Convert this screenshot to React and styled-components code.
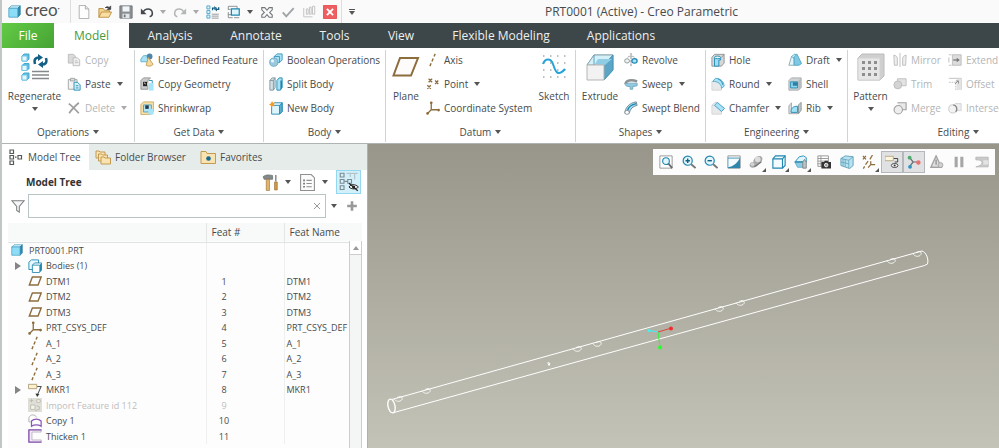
import React, { useState } from "react"

import styled, { createGlobalStyle } from "styled-components"

const BLUE = "#1f87b0"
const SKY = "#a8e2f6"
const BROWN = "#8c6d3d"
const GREY = "#8f8f8f"
const PALE = "#b9b9b9"

const axisPath = <path d="M10.5 1 9.2 4M8.2 6.2 6.8 9.6M5.8 11.8 4.5 15" stroke={BROWN} strokeWidth="1.6" />
const csysPath = (
	<g stroke={BROWN} strokeWidth="1.5" fill={BROWN}>
		<path d="M6 2v8h8M6 10l-4 4" fill="none" />
		<circle cx="6" cy="2" r=".8" />
		<circle cx="14.4" cy="10.4" r=".8" />
		<circle cx="1.8" cy="14.2" r=".8" />
	</g>
)
const planePath = <path d="M5 3.5h10l-3.5 9H1.5z" stroke={BROWN} strokeWidth="1.6" fill="#fff" />

// every drawing sits on a 16 x 16 grid unless it is in bigIcons
const icons = {
	cube: (
		<>
			<path d="M1 4 4 1h11l-3 3z" fill="#d6f3fc" stroke="#4ba3c4" />
			<path d="M12 4l3-3v11l-3 3z" fill="#2d8ab3" stroke="#2d7fa3" />
			<path d="M1 4h11v11H1z" fill="#8ddcf8" stroke="#4ba3c4" />
		</>
	),
	newFile: (
		<>
			<path d="M2.500.5h7l4 4v11h-11z" fill="#fdfdfd" stroke="#a6a9ab" />
			<path d="M9.500.5v4h4" fill="#dfe6ea" stroke="#a6a9ab" />
		</>
	),
	open: (
		<>
			<path d="M1 14V4h5l1.500 2H13v3" fill="#f2d48f" stroke="#b98b3c" />
			<path d="M1 14 4 8h11.500l-3 6z" fill="#f9dfa2" stroke="#b98b3c" />
			<path d="M8 3.500c1.500-2 3.500-2 5-.5M14.500 1v4h-4z" fill="#3b3f42" stroke="#3b3f42" strokeWidth=".8" />
		</>
	),
	save: (
		<>
			<path d="M1 1h14v14H1z" fill="#8b9094" stroke="#6d7275" />
			<path d="M4 1.500h8v6H4z" fill="#f2f4f5" />
			<path d="M4 10h8v5H4z" fill="#e3e6e8" />
			<path d="M5.500 11h2v3h-2z" fill="#6d7275" />
		</>
	),
	undo: (
		<>
			<path d="M3 9c3-6 10-5.500 11-.5.5 3-1 4.500-3 5" stroke="#42494d" strokeWidth="1.800" />
			<path d="M1 4v6.500h6.500z" fill="#42494d" />
		</>
	),
	redo: (
		<>
			<path d="M13 9c-3-6-10-5.500-11-.5-.5 3 1 4.500 3 5" stroke="#b4b7b9" strokeWidth="1.800" />
			<path d="M15 4v6.500H8.500z" fill="#b4b7b9" />
		</>
	),
	regen: (
		<>
			<path d="M1 1h3.500v3.500H1zM1 6.300h3.500v3.500H1zM1 11.500h3.500V15H1z" fill="#d8f3fc" stroke="#4ba3c4" />
			<path d="M6.500 10.500h8M6.500 12.700h8M6.500 15h8" stroke="#8b8f91" />
			<path d="M7.500 6V3.500H10M14.500 2.500V5H12" stroke="#145f82" strokeWidth="1.500" />
			<path d="M9.500 1v5l2.500-2.500zM12.500 2.500v5L10 5z" fill="#145f82" />
		</>
	),
	windows: (
		<>
			<path d="M1.500 5V1.500h10V5M1.500 8v6.500h5" stroke="#83888b" />
			<path d="M1 11h5M1 5h3" stroke="#83888b" />
			<path d="M5 4.500h9v7H5z" fill="#dff5fd" stroke={BLUE} strokeWidth="1.400" />
			<path d="M8 14.500h6" stroke="#83888b" />
		</>
	),
	closeAll: (
		<path
			d="M2 3h3.500L8 6l2.500-3H14v2.500L11 8.500l3 3V14h-3.500L8 11l-2.500 3H2v-2.500l3-3-3-3z"
			stroke="#70767a"
			strokeWidth="1.200"
		/>
	),
	check: <path d="M2 8.500 6 13l8.500-9.500" stroke="#a2a5a7" strokeWidth="2.200" />,
	bars: (
		<>
			<path d="M2 3.500v10h10" stroke="#bbbec0" />
			<path d="M5 4.500h2v6H5zM8.500 2.500h2v8h-2zM12 1.500h2.500v9H12z" stroke="#bbbec0" />
		</>
	),
	closeRed: (
		<>
			<path d="M.5.500h15v15H.5z" fill="#ee5f62" stroke="#e8484b" />
			<path d="m4.500 4.500 7 7M11.500 4.500l-7 7" stroke="#fff" strokeWidth="2.200" />
		</>
	),
	copy: (
		<>
			<path d="M1.500 1.500h6l2 2v8h-8z" fill="#d9dadb" stroke={PALE} />
			<path d="M7 5.500h5l2.500 2.500v6.500H7z" fill="#f0f0f0" stroke={PALE} />
			<path d="M9 9h3M9 11h4" stroke={PALE} />
		</>
	),
	paste: (
		<>
			<path d="M1.500 3h10v11h-10z" fill="#f3f3f3" stroke="#9b9fa1" />
			<path d="M4 1.500h5v3H4z" fill="#dadcdd" stroke="#9b9fa1" />
			<path d="M8 6h4l3 3v6H8z" fill="#d5f2fc" stroke={BLUE} />
			<path d="M10 10h3M10 12.500h3" stroke={BLUE} />
		</>
	),
	del: <path d="M2 3c4 3 7 6 11.500 11M13.500 2C9 6 5 10 2.500 14" stroke="#9d9fa0" strokeWidth="2" />,
	udf: (
		<>
			<path d="M1 7 4 3h6v7H1z" fill={SKY} stroke="#5aaed0" />
			<circle cx="11" cy="4" r="3.300" fill="#4c86ad" />
			<path d="m9.500 5 5.500 8c-2 2.500-6 2.500-8 1z" fill="#f4d99f" stroke="#c39a52" />
		</>
	),
	copyGeom: (
		<>
			<path d="m1 4 3-3h8L9 4v10H1z" fill="#c8cacb" stroke={GREY} />
			<path d="M3.500 5.500H8v5H3.500z" fill="#222" />
			<path d="M6.500 8 4.500 6.500M8 8h5" stroke="#fff" />
			<path d="M10 7h5.500v8.500H10z" fill="#a5e4fa" />
			<path d="M10 4h4v3" stroke={BLUE} />
		</>
	),
	shrink: (
		<>
			<path d="m1 4 3-3h11.500v11l-3 3.500H1z" fill="#f5dfa9" stroke="#d0a961" />
			<path d="M4 4.500h9v8H4z" fill="#b5e6f8" stroke="#4a9dc0" />
			<path d="M6 5h4v4H6z" fill="#223746" />
			<path d="M9.500 9h6v6.500h-6z" fill="#a5e4fa" />
		</>
	),
	boolean: (
		<>
			<path d="m6 4 3-3h6v7l-3 3H6z" fill={SKY} stroke="#3c96bb" />
			<path d="M6 4h6v7" stroke="#3c96bb" />
			<circle cx="5.500" cy="10.500" r="4.700" fill="#9ac9de" stroke="#6ba7c2" />
			<circle cx="4" cy="9" r="1.800" fill="#e2f6fd" />
		</>
	),
	split: (
		<>
			<path d="m1 4 2.500-3H7v11l-2 3H1z" fill="#d2e0e5" stroke="#7b959f" />
			<path d="M5 4v11M1 4h4l2-3" stroke="#7b959f" />
			<path d="m9 4 2.500-3H15v11l-2 3H9z" fill={SKY} stroke={BLUE} />
			<path d="M13 4h2v8l-2 3z" fill={BLUE} />
		</>
	),
	newBody: (
		<>
			<path d="m3 5 3-3h9v10l-3 3H3z" fill="#dff5fd" stroke={BLUE} />
			<path d="M12 5l3-3v10l-3 3z" fill="#5aaed0" stroke={BLUE} />
			<path d="M3 5h9" stroke={BLUE} />
			<path d="m3.500 0 1 2 2.200-.2L5.500 4l1 2-2.200-.4L2.500 7.500 2 5 0 4l2-1.200z" fill="#f59b23" />
		</>
	),
	axis: axisPath,
	point: (
		<path
			d="m3 2 4 4M7 2 3 6M10.500 4l3.500 4M14 4l-3.500 4M1.500 9.500l4 4M5.500 9.500l-4 4"
			stroke={BROWN}
			strokeWidth="1.500"
		/>
	),
	csys: csysPath,
	plane: planePath,
	revolve: (
		<>
			<path d="M8 0v16" stroke="#7a8185" strokeDasharray="3 1" />
			<ellipse cx="3.500" cy="9" rx="2.800" ry="2.500" fill="#eef1f2" stroke="#8b9295" />
			<ellipse cx="12" cy="9" rx="3" ry="2.500" fill={SKY} stroke={BLUE} strokeWidth="1.400" />
			<path d="M4 5c2-2 6-2 8 0" stroke="#9aa1a4" />
		</>
	),
	sweep: (
		<>
			<path d="M2 8c0-4 6-5.500 13-3" stroke="#8b9295" strokeWidth="3" />
			<path d="M1 7c0 3 2 4 6 4v3h3v-3l5-1V7H6c-2 0-4 1-5 0z" fill="#8ecbe2" stroke="#78a6b8" />
		</>
	),
	sweptBlend: (
		<>
			<path d="M1 14c0-6 5-12 13-13l1 4C10 6 7 9 6 14z" fill={SKY} stroke="#6b7f88" />
			<path d="M4 11c1-4 5-7 10-8" stroke={BLUE} strokeWidth="1.600" />
			<ellipse cx="3.500" cy="13" rx="2.500" ry="2.300" fill="#fff" stroke="#858c8f" />
		</>
	),
	hole: (
		<>
			<path d="m1 5 3-3.500h11v10L12 15H1z" fill="#d5d7d8" stroke={GREY} />
			<path d="M4 15V6c0-2 7-2 7 0v2H9v7z" fill="#9edcf3" stroke={BLUE} />
			<ellipse cx="7.500" cy="5" rx="3.500" ry="1.500" fill="#e7f8fe" stroke={BLUE} />
			<path d="M12 5l3-3.500" stroke={GREY} />
		</>
	),
	round: (
		<>
			<path d="M1 5h8l3 3v7H1z" fill="#e8e9ea" stroke="#d3d5d6" />
			<path d="M2 5 5 1.500c5 0 10 3 10 9L12 13c0-5-4-8-10-8z" fill={SKY} stroke="#55a8c8" />
			<path d="M8 2c3 1.500 5 4 5.500 7" stroke={BLUE} />
		</>
	),
	chamfer: (
		<>
			<path d="M1 5h6l5 5v5H1z" fill="#e8e9ea" stroke="#d3d5d6" />
			<path d="m4 5 3-3.500 8.500 7L12 12z" fill={SKY} stroke="#3c96bb" />
			<path d="M1 5l4-3.500h2" stroke="#c3c6c7" />
		</>
	),
	draft: (
		<>
			<path d="M1 14 4 4h3v10z" fill="#e1f5fc" stroke="#8da5ae" />
			<path d="m4 4 4-3 2 2-3 3z" fill="#fff" stroke="#4ba3c4" />
			<path d="M7 14V4l3-3 5.500 11-3 2z" fill="#7ec8e3" stroke="#4ba3c4" />
		</>
	),
	shell: (
		<>
			<path d="m1 4 3-3h11v11l-3 3H1z" fill="#d0d3d4" stroke="#a3a7a9" />
			<path d="M12 4l3-3v11l-3 3z" fill="#b7bbbd" />
			<path d="M3 5.500h8v7H3z" fill="#8ed5ef" stroke={BLUE} />
			<path d="M5.500 6H11v4H5.500z" fill="#2c7ea4" />
		</>
	),
	rib: (
		<>
			<path d="M1 5.500 4 2v7l11-.5-3 6H1z" fill="#d6dadc" stroke="#a3a7a9" />
			<path d="m12 4.500 3-3v9l-3 4z" fill="#c3c9cc" stroke="#8b9295" />
			<path d="M3.500 13c0-5 2-7 7.500-7v7z" fill="#9fe2f8" stroke={BLUE} />
		</>
	),
	mirror: (
		<>
			<path d="M1 2.500c3 .5 4 2 4 4.500v7H1.500zM15 2.500c-3 .5-4 2-4 4.500v7h3.500z" fill="#eee" stroke={PALE} />
			<path d="M8 0v16" stroke={PALE} />
		</>
	),
	trim: (
		<>
			<path d="M5 2h10v8H5z" fill="#e3e3e3" stroke="#bdbdbd" />
			<circle cx="5.500" cy="9" r="4.500" fill="#d4d4d4" stroke={PALE} />
		</>
	),
	merge: (
		<>
			<path d="M5 2h10v8H10" stroke="#a2a2a2" fill="#e9e9e9" strokeWidth="1.300" />
			<circle cx="6" cy="10" r="4.800" stroke="#a2a2a2" strokeWidth="1.300" fill="#eee" />
		</>
	),
	extend: (
		<>
			<path d="M5 2h10v12H5z" fill="#ddd" stroke={PALE} />
			<path d="M1 2h3M1 14h3M1 5v6" stroke={PALE} />
			<path d="M6 8h5" stroke="#777" strokeWidth="1.500" />
			<path d="m10 5.500 3.500 2.500-3.500 2.500z" fill="#777" />
		</>
	),
	offset: (
		<>
			<path d="M1 1.500h14v13" stroke={PALE} />
			<path d="M1 6h8v9" stroke={PALE} strokeDasharray="2 1" />
			<path d="M10 2h5v13h-5z" fill="#e3e3e3" />
			<path d="m8 8 3.500-3.500M9 4.500h3v3" stroke="#888" />
		</>
	),
	intersect: (
		<>
			<path d="M8 3h7v8H9" fill="#eee" stroke="#d0d0d0" />
			<circle cx="5.500" cy="9" r="4.700" stroke="#c6c6c6" fill="#f3f3f3" />
			<path d="M6 4.500c4 1 5 4 3 8" stroke="#888" strokeWidth="1.500" />
		</>
	),
	modelTree: (
		<path
			d="M2 1h3.500v3.500H2zM2 6.500h3.500V10H2zM2 12h3.500v3.500H2zM10 6.500h3.500V10H10zM7 8.200h1.500"
			stroke="#55595b"
			strokeWidth="1.200"
		/>
	),
	folders: (
		<g fill="#f9e3b0" stroke="#c39a52">
			<path d="M1 9V2h3l1 1h5v6z" />
			<path d="M3.500 12V5h3l1 1h5v6z" />
			<path d="M6 15V8h3l1 1h5.500v6z" />
		</g>
	),
	favorites: (
		<>
			<path d="M1 14.500V2.500h5l1 2h8.500v10z" fill="#f9e3b0" stroke="#c39a52" />
			<circle cx="8.500" cy="9.500" r="2.300" fill="#16698f" />
		</>
	),
	hammer: (
		<>
			<path d="M1 2.500C3 .5 7 .5 10 1.500V5H2z" fill="#84898c" stroke="#5f6467" strokeWidth=".6" />
			<path d="M4 5h3v10.500H4z" fill="#e3b56c" stroke="#9b7132" strokeWidth=".6" />
			<path d="M13 1v6" stroke="#777" strokeWidth="1.200" />
			<path d="M11.800 7.500h2.600v7.500h-2.600z" fill="#d59a3f" stroke="#9b7132" strokeWidth=".6" />
		</>
	),
	list: (
		<>
			<path d="M1.500.5h10l3 3v12h-13z" fill="#fbfbfb" stroke={GREY} />
			<path d="M4 6h1.500M4 9h1.500M4 12h1.500" stroke="#666" strokeWidth="1.600" />
			<path d="M7 6h5M7 9h5M7 12h5" stroke={GREY} />
		</>
	),
	treeHide: (
		<>
			<path d="M1 1h3v3H1zM1 6h3v3H1zM1 11h3v3H1zM7 6h3v3H7zM4.500 7.500H7" stroke="#7b8b92" strokeWidth=".9" />
			<path d="M6 1h9M12.500 1v5M9 1v3" stroke="#b3c4cb" />
			<path d="M8 12c1.500-2.500 5-2.500 7.500 0-2 2-5.500 2-7.500 0z" fill="#fff" stroke="#222" strokeWidth=".8" />
			<circle cx="11.700" cy="12" r="1.300" fill="#222" />
			<path d="m8 9 7 6" stroke="#222" strokeWidth=".9" />
		</>
	),
	filter: <path d="M1 2h14L9.500 8.500V15l-3-2V8.500z" fill="#f6f6f6" stroke="#7b7f81" strokeWidth="1.200" />,
	clear: <path d="m4 4 8 8M12 4l-8 8" stroke="#8b8f91" strokeWidth="1.200" />,
	plus: <path d="M8 2.500v11M2.500 8h11" stroke="#999" strokeWidth="3" />,
	bodies: (
		<>
			<path d="M1 3.500 4 1h8v8l-2 3H1z" fill="#e7f8fe" stroke={BLUE} />
			<path d="m5 7 2.500-2.500h8v8L13 15.500H5z" fill="#fff" stroke={BLUE} />
			<path d="m13 7 2.500-2.500v8L13 15.500z" fill={BLUE} />
			<path d="M5 7h8" stroke={BLUE} />
		</>
	),
	marker: (
		<>
			<path d="M.5 1.500h9.500v5H.5z" fill="#fdf0cd" stroke="#a99a74" />
			<path d="M10.500 4h4.500l-4 9" stroke="#555" strokeWidth="1.200" />
			<path d="m8.500 12 4.500.5-2.500 3.500z" fill="#333" />
		</>
	),
	importFeat: (
		<g stroke="#b9b9ac">
			<path d="M0 0h16v16H0z" fill="#dfdfd8" stroke="none" />
			<path d="M2 3h4M4 1v4M10 2h4v3h-4zM3 8h5v5H3z" fill="#f4f4ee" />
			<path d="m10 9 3 1v3l-5 1.500" />
		</g>
	),
	copyFeat: (
		<>
			<path d="M1 9V4c2-4 7-4 9 0" stroke="#aaa" />
			<path d="M1 9h2" stroke="#aaa" />
			<path d="M4 14V8c3-3 8-3 11 0v6c-3-2-8-2-11 0z" fill="#fff" stroke="#8a56b5" strokeWidth="1.400" />
		</>
	),
	thicken: (
		<>
			<path d="M15 1H1v14h14v-2.500H4.500v-9H15z" fill="#f3ecf8" stroke="#a9a0b1" strokeWidth=".8" />
			<path d="M15.500 1H1v14h14.500" stroke="#8a56b5" strokeWidth="1.500" />
		</>
	),
	refit: (
		<>
			<path d="M1 1h14v14H1z" fill="#fff" stroke={GREY} />
			<circle cx="8" cy="7" r="3.800" fill="#e3f6fd" stroke={BLUE} strokeWidth="1.300" />
			<path d="m11 10 4 5" stroke="#666" strokeWidth="2" />
		</>
	),
	zoomIn: (
		<>
			<circle cx="6.500" cy="6.500" r="5.200" fill="#e3f6fd" stroke={BLUE} strokeWidth="1.400" />
			<path d="M6.500 4v5M4 6.500h5" stroke="#145f82" strokeWidth="1.600" />
			<path d="m10.500 10.500 5 4.500" stroke="#777" strokeWidth="2.200" />
		</>
	),
	zoomOut: (
		<>
			<circle cx="6.500" cy="6.500" r="5.200" fill="#e3f6fd" stroke={BLUE} strokeWidth="1.400" />
			<path d="M4 6.500h5" stroke="#145f82" strokeWidth="1.600" />
			<path d="m10.500 10.500 5 4.500" stroke="#777" strokeWidth="2.200" />
		</>
	),
	repaint: (
		<>
			<path d="M1 1h14v14H1z" fill="#fff" stroke={GREY} />
			<path d="M1 15V3h14v12z" fill="#2f86ad" />
			<path d="M1.500 14C7 13 12 9 14.500 4H1.500z" fill="#f4fbfe" />
		</>
	),
	shading: (
		<>
			<path d="M1 13c-1-3 1-5 4-5 0-4 3-7 7-7 3 0 4 3 3 5-1 4-4 4-5 5-2 3-6 5-9 2z" fill="#a8a8a8" />
			<circle cx="10" cy="5" r="3.200" fill="#dcdcdc" />
			<circle cx="4" cy="10.500" r="2.200" fill="#d2d2d2" />
			<path d="M6 13c3 0 4-3 8-5" stroke="#757575" strokeWidth="1.500" />
		</>
	),
	viewCube: (
		<>
			<path d="m1 4.500 3-3.500h11v11l-3 3H1z" fill="#f3fbfe" stroke={BLUE} strokeWidth="1.300" />
			<path d="M1 4.500h11V15M12 4.500 15 1" stroke={BLUE} strokeWidth="1.300" />
		</>
	),
	views: (
		<>
			<path d="m1 8 5-6 5-1 3 2v5z" fill="#dff5fd" stroke={BLUE} />
			<path d="m1 8 3 6h7V8z" fill="#8ecbe2" stroke="#5aaed0" />
			<path d="M1 8h13" stroke={BLUE} strokeWidth="1.300" />
			<path d="m10 8 2-3 2 3v7h-4z" fill="#bfc3c5" stroke="#7b8083" />
		</>
	),
	camera: (
		<>
			<path d="M1 1h12v12H1zM1 4h12M1 7h12M1 10h12M4.500 1v12" fill="#fff" stroke={GREY} />
			<path d="M5 8h3l1-1.500h3L13 8h3v7.500H5z" fill="#333" />
			<circle cx="10.500" cy="11.500" r="2" fill="#999" stroke="#fff" />
		</>
	),
	persp: (
		<>
			<path d="m1 4 5-3 9 1v10l-4 3.500L1 12z" fill="#b7e2f1" stroke="#5a9bb5" />
			<path d="m1 4 9 2v9M10 6l5-4M3.500 4.500v8M6 5v8.500M1 8l9 2" stroke="#5a9bb5" strokeWidth=".8" />
		</>
	),
	datums: (
		<g stroke={BROWN} strokeWidth="1.400">
			<path d="m1 1 3.500 4M4.500 1 1 5M12 0 9 5M7 7l-3 4M3 13l-1.500 2.500" />
			<path d="M10 7v4h5M10 11l-3 3.500" />
		</g>
	),
	annot: (
		<>
			<path d="M0 1.500h9.500v5H0z" fill="#fdf6dd" stroke="#b5a67e" />
			<path d="M10 4h4.500v4H11" stroke="#333" />
			<ellipse cx="11" cy="12" rx="3.800" ry="2.300" fill="#fff" stroke="#333" />
			<circle cx="11" cy="12" r="1.200" fill="#333" />
		</>
	),
	spin: (
		<>
			<path d="m7 8-4-5M7 8h6M7 8l-4 5" stroke="#6b6f72" strokeWidth="1.400" />
			<circle cx="3" cy="3" r="2.200" fill="#4dab6c" />
			<circle cx="13" cy="8.500" r="2.500" fill="#ed6e6e" />
			<circle cx="3.500" cy="13.500" r="2.200" fill="#2e93c4" />
		</>
	),
	sim: (
		<g stroke="#a3a3a3">
			<path d="M7 1 1 14h12z" fill="#e0e0e0" strokeWidth="1.500" />
			<path d="M7 5v6" strokeWidth="2" />
			<circle cx="12" cy="11.500" r="2.800" fill="#d0d0d0" />
		</g>
	),
	pause: <path d="M3 2h3.500v12H3zM9.500 2H13v12H9.500z" fill="#a6a6a6" />,
	flag: (
		<>
			<path d="M1 2.500h14v11H1c5-1 7-3 7-5s-3-3-7-3z" fill="#c9c9c9" stroke="#b5b5b5" />
			<path d="M9.500 6H15v5H9.500z" fill="#e3e3e3" />
		</>
	),
}

// larger ribbon drawings, 28 x 28
const bigIcons = {
	regen: (
		<>
			{[1, 10.5, 20].map((y) => (
				<g key={y}>
					<path d={`M1 ${y + 2} l2 -2 h5 v5 l-2 2 h-5z`} fill="#5bbce0" stroke="#4aa9ce" />
					<path d={`M1 ${y + 2}h5v5H1z`} fill="#e4f7fd" stroke="#76c8e6" />
				</g>
			))}
			<path d="M11 18.500h17M11 22h17M11 25.500h17" stroke="#85898b" strokeWidth="1.300" />
			<path d="M14 11c-1.500-5 1-6.500 4-6.500M25 5c1.500 5-1 6.500-4 6.500" stroke="#135f85" strokeWidth="2.500" />
			<path d="m17 1 5 3.500-5 3.500zM22 8v7l-5-3.500z" fill="#135f85" />
		</>
	),
	plane: <path d="M8 5h18l-7 17.500H1.500z" stroke={BROWN} strokeWidth="2" fill="#fdfcfa" />,
	sketch: (
		<>
			{[3, 10, 17, 24].map((y) =>
				[3, 10, 17, 24].map((x) => <path key={`${x}-${y}`} d={`M${x} ${y}h1.500`} stroke="#aaa" strokeWidth="1.500" />)
			)}
			<path d="M3 11C5 5 11 5 13 11s4 14 12 5" stroke="#29a3d8" strokeWidth="2" />
		</>
	),
	extrude: (
		<>
			<path d="m1 12 7-10h19v15L18 27z" fill="#b9e6f5" stroke="#6bbad6" />
			<path d="m1 12 7-10h19l-9 10z" fill="#d4f1fa" stroke="#8b9295" strokeWidth=".8" />
			<path d="M8 2v10M18 12l9-10v15l-9 10z" fill="#5ba5c6" stroke="#3f8fb3" strokeWidth=".8" />
			<path d="M9 11 12 6h14l-7 6z" fill="#8fcde4" />
			<path d="M1 12h17v15H1z" fill="#f2f2f2" stroke="#b5b5b5" />
		</>
	),
	pattern: (
		<>
			<path d="m1 5 4-4h22v22l-4 4H1z" fill="#cfcfcf" stroke="#bbb" />
			<path d="M1 5h22v22H1z" fill="#e6e6e6" stroke="#d2d2d2" />
			{[9, 15, 21].map((y) =>
				[5, 11, 17].map((x) => <path key={`${x}-${y}`} d={`M${x} ${y - 1}h3v3h-3z`} fill="#8e8e8e" />)
			)}
		</>
	),
}

function Icon({ name, size = 14, big }) {
	const box = big ? 28 : 16
	return (
		<IconSvg $size={big ? 28 : size} viewBox={`0 0 ${box} ${box}`} fill="none" aria-hidden="true">
			{big ? bigIcons[name] : icons[name]}
		</IconSvg>
	)
}

const quickTools = [
	{ icon: "newFile", label: "New" },
	{ icon: "open", label: "Open" },
	{ icon: "save", label: "Save" },
	{ icon: "undo", label: "Undo", arrow: "off" },
	{ icon: "redo", label: "Redo", arrow: "off" },
	{ icon: "regen", label: "Regenerate" },
	{ icon: "windows", label: "Windows", arrow: "on" },
	{ icon: "closeAll", label: "Close" },
	{ icon: "check", label: "Accept" },
	{ icon: "bars", label: "Layers" },
	{ icon: "closeRed", label: "Erase" },
]

const menus = [
	["Analysis", 82],
	["Annotate", 90],
	["Tools", 67],
	["View", 66],
	["Flexible Modeling", 134],
	["Applications", 106],
]

const groups = [
	{
		name: "Operations",
		width: 133,
		parts: [
			{ big: "regen", label: "Regenerate", width: 55, arrow: true },
			{
				width: 60,
				rows: [
					{ icon: "copy", label: "Copy", off: true },
					{ icon: "paste", label: "Paste", arrow: true },
					{ icon: "del", label: "Delete", arrow: true, off: true },
				],
			},
		],
	},
	{
		name: "Get Data",
		width: 129,
		parts: [
			{
				width: 118,
				rows: [
					{ icon: "udf", label: "User-Defined Feature" },
					{ icon: "copyGeom", label: "Copy Geometry" },
					{ icon: "shrink", label: "Shrinkwrap" },
				],
			},
		],
	},
	{
		name: "Body",
		width: 122,
		parts: [
			{
				width: 110,
				rows: [
					{ icon: "boolean", label: "Boolean Operations" },
					{ icon: "split", label: "Split Body" },
					{ icon: "newBody", label: "New Body" },
				],
			},
		],
	},
	{
		name: "Datum",
		width: 190,
		parts: [
			{ big: "plane", label: "Plane", width: 30 },
			{
				width: 108,
				rows: [
					{ icon: "axis", label: "Axis" },
					{ icon: "point", label: "Point", arrow: true },
					{ icon: "csys", label: "Coordinate System" },
				],
			},
			{ big: "sketch", label: "Sketch", width: 30 },
		],
	},
	{
		name: "Shapes",
		width: 130,
		parts: [
			{ big: "extrude", label: "Extrude", width: 38 },
			{
				width: 78,
				rows: [
					{ icon: "revolve", label: "Revolve" },
					{ icon: "sweep", label: "Sweep", arrow: true },
					{ icon: "sweptBlend", label: "Swept Blend" },
				],
			},
		],
	},
	{
		name: "Engineering",
		width: 142,
		parts: [
			{
				width: 72,
				rows: [
					{ icon: "hole", label: "Hole" },
					{ icon: "round", label: "Round", arrow: true },
					{ icon: "chamfer", label: "Chamfer", arrow: true },
				],
			},
			{
				width: 55,
				rows: [
					{ icon: "draft", label: "Draft", arrow: true },
					{ icon: "shell", label: "Shell" },
					{ icon: "rib", label: "Rib", arrow: true },
				],
			},
		],
	},
	{
		name: "Editing",
		width: 222,
		parts: [
			{ big: "pattern", label: "Pattern", width: 35, arrow: true },
			{
				width: 50,
				rows: [
					{ icon: "mirror", label: "Mirror", off: true },
					{ icon: "trim", label: "Trim", off: true },
					{ icon: "merge", label: "Merge", off: true },
				],
			},
			{
				width: 70,
				rows: [
					{ icon: "extend", label: "Extend", off: true },
					{ icon: "offset", label: "Offset", off: true },
					{ icon: "intersect", label: "Intersect", off: true },
				],
			},
		],
	},
]

const features = [
	{ icon: "bodies", label: "Bodies (1)", open: true },
	{ icon: "plane", label: "DTM1", num: 1, name: "DTM1" },
	{ icon: "plane", label: "DTM2", num: 2, name: "DTM2" },
	{ icon: "plane", label: "DTM3", num: 3, name: "DTM3" },
	{ icon: "csys", label: "PRT_CSYS_DEF", num: 4, name: "PRT_CSYS_DEF" },
	{ icon: "axis", label: "A_1", num: 5, name: "A_1" },
	{ icon: "axis", label: "A_2", num: 6, name: "A_2" },
	{ icon: "axis", label: "A_3", num: 7, name: "A_3" },
	{ icon: "marker", label: "MKR1", num: 8, name: "MKR1", open: true },
	{ icon: "importFeat", label: "Import Feature id 112", num: 9, off: true },
	{ icon: "copyFeat", label: "Copy 1", num: 10 },
	{ icon: "thicken", label: "Thicken 1", num: 11 },
]

const viewTools = [
	["refit", "Refit"],
	["zoomIn", "Zoom In"],
	["zoomOut", "Zoom Out"],
	["repaint", "Repaint"],
	["shading", "Display Style", "more"],
	["viewCube", "Saved Orientations", "more"],
	["views", "View Manager", "more"],
	["camera", "Capture"],
	["persp", "Perspective"],
	["datums", "Datum Display", "more"],
	["annot", "Annotation Display", "on"],
	["spin", "Spin Center", "on"],
	["sim", "Simulate"],
	["pause", "Pause"],
	["flag", "Resume"],
]

// holes cut along the top edge of the tube
const holes = [
	[398, 399],
	[426, 391],
	[577, 349],
	[597, 344],
	[719, 309],
	[740, 303],
	[891, 261],
	[917, 254],
]

function Part({ part }) {
	if (part.big) {
		return (
			<BigButton $width={part.width}>
				<Icon big name={part.big} />
				<span>{part.label}</span>
				{part.arrow && <Arrow />}
			</BigButton>
		)
	}
	return (
		<Column $width={part.width}>
			{part.rows.map((row) => (
				<SmallButton key={row.label} disabled={row.off}>
					<Icon name={row.icon} />
					<span>{row.label}</span>
					{row.arrow && <Arrow $off={row.off} $push />}
				</SmallButton>
			))}
		</Column>
	)
}

function App() {
	const [search, setSearch] = useState("")
	const [hideItems, setHideItems] = useState(true)

	return (
		<Container>
			<GlobalStyle />

			<TitleBar>
				<Brand>
					<Icon name="cube" size={13} />
					<span>creo</span>
					<sup>•</sup>
				</Brand>
				<QuickAccess>
					{quickTools.map((tool) => (
						<QuickTool key={tool.label} aria-label={tool.label}>
							<Icon name={tool.icon} />
							{tool.arrow && <Arrow $off={tool.arrow === "off"} $push />}
						</QuickTool>
					))}
				</QuickAccess>
				<Customize aria-label="Customize">
					<Arrow />
				</Customize>
				<Title>PRT0001 (Active) - Creo Parametric</Title>
			</TitleBar>

			<MenuBar>
				<FileTab>File</FileTab>
				<ModelTab>Model</ModelTab>
				{menus.map(([name, width]) => (
					<MenuTab key={name} $width={width}>
						{name}
					</MenuTab>
				))}
			</MenuBar>

			<Ribbon>
				{groups.map((group) => (
					<Group key={group.name} $width={group.width}>
						<Tools>
							{group.parts.map((part, index) => (
								<Part key={index} part={part} />
							))}
						</Tools>
						<GroupLabel>
							{group.name}
							<Arrow />
						</GroupLabel>
					</Group>
				))}
			</Ribbon>

			<Work>
				<SidePanel>
					<PanelTabs>
						<PanelTab $active $width={87}>
							<Icon name="modelTree" size={16} />
							Model Tree
						</PanelTab>
						<PanelTab $width={105}>
							<Icon name="folders" size={16} />
							Folder Browser
						</PanelTab>
						<PanelTab $width={80}>
							<Icon name="favorites" size={16} />
							Favorites
						</PanelTab>
					</PanelTabs>

					<PanelHeader>
						<h2>Model Tree</h2>
						<PanelTool aria-label="Settings">
							<Icon name="hammer" size={17} />
							<Arrow $push />
						</PanelTool>
						<PanelTool aria-label="Show">
							<Icon name="list" size={17} />
							<Arrow $push />
						</PanelTool>
						<Toggle aria-label="Hide items" onClick={() => setHideItems(!hideItems)} $on={hideItems}>
							<Icon name="treeHide" size={20} />
						</Toggle>
					</PanelHeader>

					<SearchRow>
						<Icon name="filter" size={14} />
						<SearchBox>
							<input aria-label="Filter tree" value={search} onChange={(e) => setSearch(e.target.value)} />
							<button aria-label="Clear" onClick={() => setSearch("")}>
								<Icon name="clear" size={12} />
							</button>
						</SearchBox>
						<Arrow />
						<button aria-label="Add">
							<Icon name="plus" size={14} />
						</button>
					</SearchRow>

					<TreeArea>
						<Tree>
							<colgroup>
								<col />
								<col className="num" />
								<col className="name" />
							</colgroup>
							<thead>
								<tr>
									<th aria-label="Item" />
									<th>Feat #</th>
									<th>Feat Name</th>
								</tr>
							</thead>
							<tbody>
								<tr>
									<td>
										<Item $root>
											<Icon name="cube" size={12} />
											PRT0001.PRT
										</Item>
									</td>
									<td />
									<td />
								</tr>
								{features
									.filter((f) => f.label.toLowerCase().includes(search.toLowerCase()))
									.map((f) => (
										<TreeRow key={f.label} $off={f.off}>
											<td>
												<Item>
													<Twisty>{f.open && <i />}</Twisty>
													<Icon name={f.icon} />
													{f.label}
												</Item>
											</td>
											<td>{f.num}</td>
											<td>{f.name}</td>
										</TreeRow>
									))}
							</tbody>
						</Tree>
						<Scroll>
							<button aria-label="Scroll up">
								<Arrow $up />
							</button>
						</Scroll>
					</TreeArea>
				</SidePanel>

				<Viewport>
					<ViewBar>
						{viewTools.map(([icon, label, state]) => (
							<ViewTool key={label} aria-label={label} $on={state === "on"}>
								<Icon name={icon} />
								{state === "more" && <Corner />}
							</ViewTool>
						))}
					</ViewBar>
					<Scene viewBox="368 176 631 272" preserveAspectRatio="xMidYMid meet">
						<g stroke="#fff" fill="none">
							<path d="M392 400 922 251.500c4 1 7 8 5.500 13l-3 1.500L394 413" />
							<ellipse cx="391.500" cy="406.500" rx="3.500" ry="7" transform="rotate(-12 391.500 406.500)" strokeWidth="1.400" />
							{holes.map(([x, y]) => (
								<path key={x} d={`M${x - 4} ${y}c1 3 6 4 8 1 1-2-1-3-2-3l-3 1`} strokeWidth=".8" />
							))}
							<path d="M548 363l2 1-1 2-1-2z" />
						</g>
						<path d="M658 332.500 649 331" stroke="#3df3f3" />
						<path d="m658 332.500 12-3.500" stroke="#e8403c" />
						<path d="m658 332.500 2 15" stroke="#35f23c" />
						<circle cx="649" cy="331" r="1.500" fill="#3df3f3" />
						<circle cx="671" cy="329" r="2" fill="#f52a2a" />
						<circle cx="660" cy="348" r="2" fill="#26ff2c" />
					</Scene>
				</Viewport>
			</Work>
		</Container>
	)
}

export default App

const GlobalStyle = createGlobalStyle`
	* {
		box-sizing: border-box;
	}

	body {
		margin: 0;
		font-family: "Open Sans", "Noto Sans", sans-serif;
		font-size: 10px;
		color: #474b4d;
	}

	button {
		margin: 0;
		padding: 0;
		border: 0;
		background: none;
		font: inherit;
		color: inherit;
	}
`

const Container = styled.div`
	display: flex;
	flex-direction: column;
	height: 100vh;
	overflow: hidden;
	border-left: 2px solid #c3c6c7;
	background: #fff;
`

const IconSvg = styled.svg`
	display: block;
	flex: none;
	width: ${(p) => p.$size}px;
	height: ${(p) => p.$size}px;
`

const Arrow = styled.i`
	flex: none;
	width: 0;
	height: 0;
	border: 3px solid transparent;
	border-top: 4px solid ${(p) => (p.$off ? "#aaa" : "#555")};
	border-bottom: 0;
	margin-left: ${(p) => (p.$push ? 6 : 0)}px;
	${(p) => p.$up && "border-top: 0; border-bottom: 4px solid #999;"}
`

const TitleBar = styled.header`
	display: flex;
	align-items: center;
	flex: none;
	height: 23px;
	background: #fafafa;
`

const Brand = styled.div`
	display: flex;
	align-items: center;
	width: 69px;
	height: 100%;
	padding-left: 6px;
	border-right: 1px solid #ddd;

	span {
		margin-left: 4px;
		font-family: "Lato", sans-serif;
		font-size: 17px;
		line-height: 18px;
		padding-bottom: 3px;
		color: #4c5154;
	}

	sup {
		font-size: 6px;
		line-height: 8px;
		padding-bottom: 5px;
	}
`

const QuickAccess = styled.div`
	display: flex;
	align-items: center;
	gap: 7px;
	height: 100%;
	padding: 0 4px 0 6px;
	border-right: 1px solid #ddd;
`

const QuickTool = styled.button`
	display: flex;
	align-items: center;
`

const Customize = styled.button`
	display: flex;
	margin: 0 7px;
	border-top: 1px solid #555;
	padding-top: 1px;
`

const Title = styled.h1`
	flex: 1;
	margin: 0;
	padding-right: 78px;
	font-size: 12px;
	font-weight: 400;
	text-align: center;
`

const MenuBar = styled.nav`
	display: flex;
	flex: none;
	height: 25px;
	background: #3d4648;
	font-size: 12px;
`

const FileTab = styled.button`
	width: 52px;
	background: linear-gradient(135deg, #63cb45, #46a335);
	color: #fff;
`

const ModelTab = styled.button`
	width: 75px;
	background: #fff;
	color: #459a3e;
`

const MenuTab = styled.button`
	width: ${(p) => p.$width}px;
	color: #eef0f0;
	white-space: nowrap;
`

const Ribbon = styled.section`
	display: flex;
	flex: none;
	height: 96px;
	overflow: hidden;
	border-bottom: 1px solid #b0b3b4;
`

const Group = styled.div`
	display: flex;
	flex-direction: column;
	flex: none;
	width: ${(p) => p.$width}px;
	margin: 2px 0 1px;
	padding: 0 5px;
	border-right: 1px solid #cfd5d5;
`

const Tools = styled.div`
	display: flex;
	gap: 5px;
	height: 72px;
`

const Column = styled.div`
	display: flex;
	flex-direction: column;
	flex: none;
	width: ${(p) => p.$width}px;
`

const SmallButton = styled.button`
	display: flex;
	align-items: center;
	height: 24px;
	padding-bottom: 4px;
	white-space: nowrap;
	color: ${(p) => (p.disabled ? "#b3b5b6" : "#474b4d")};

	span {
		margin-left: 4px;
	}
`

const BigButton = styled.button`
	display: flex;
	flex-direction: column;
	align-items: center;
	flex: none;
	width: ${(p) => p.$width}px;
	padding-top: 3px;

	span {
		margin: 8px 0 4px;
		line-height: 14px;
		white-space: nowrap;
	}
`

const GroupLabel = styled.div`
	display: flex;
	align-items: center;
	justify-content: center;
	gap: 4px;
	height: 20px;
`

const Work = styled.main`
	display: flex;
	flex: 1;
	min-height: 0;
`

const SidePanel = styled.aside`
	display: flex;
	flex-direction: column;
	flex: none;
	width: 366px;
	border-right: 1px solid #b0b1aa;
`

const PanelTabs = styled.div`
	display: flex;
	flex: none;
	height: 26px;
	background: #e6ecea;
`

const PanelTab = styled.button`
	display: flex;
	align-items: center;
	gap: 4px;
	width: ${(p) => p.$width}px;
	padding-left: 6px;
	white-space: nowrap;
	background: ${(p) => (p.$active ? "#fff" : "none")};
`

const PanelHeader = styled.div`
	display: flex;
	align-items: center;
	flex: none;
	gap: 8px;
	height: 24px;
	padding: 0 6px 0 24px;

	h2 {
		flex: 1;
		margin: 0;
		font-size: 10px;
		font-weight: 700;
		color: #333;
	}
`

const PanelTool = styled.button`
	display: flex;
	align-items: center;
`

const Toggle = styled.button`
	display: grid;
	place-items: center;
	width: 25px;
	height: 24px;
	border: 1px solid ${(p) => (p.$on ? "#93d7f0" : "transparent")};
	background: ${(p) => (p.$on ? "#d3effa" : "none")};
`

const SearchRow = styled.div`
	display: flex;
	align-items: center;
	flex: none;
	gap: 3px;
	padding: 0 8px 0 9px;

	> i {
		margin: 0 5px 0 2px;
	}
`

const SearchBox = styled.div`
	display: flex;
	align-items: center;
	flex: 1;
	height: 24px;
	border: 1px solid #b9c5c5;

	input {
		flex: 1;
		min-width: 0;
		height: 20px;
		border: 0;
		outline: 0;
		font: inherit;
	}

	button {
		width: 14px;
	}
`

const TreeArea = styled.div`
	display: flex;
	flex: 1;
	min-height: 0;
	margin: 5px 5px 0 6px;
	overflow: hidden;
	background: linear-gradient(#f8f9f9 18px, #fdfdfd 18px);
`

const Tree = styled.table`
	flex: 1;
	align-self: flex-start;
	table-layout: fixed;
	border-collapse: collapse;
	font-size: 9px;

	.num {
		width: 78px;
	}

	.name {
		width: 65px;
	}

	th {
		height: 19px;
		padding: 0 0 0 5px;
		border-right: 1px solid #e3e6e6;
		border-bottom: 1px solid #dfe3e3;
		font-size: 10px;
		font-weight: 400;
		text-align: left;
		white-space: nowrap;
	}

	th:last-child {
		border-right: 0;
	}

	td {
		padding: 0;
		line-height: 15px;
		border-right: 1px solid #eef0f0;
		white-space: nowrap;
	}

	tr:nth-child(even) td {
		line-height: 16px;
	}

	td:nth-child(2) {
		padding-right: 42px;
		text-align: center;
	}

	td:last-child {
		padding-left: 2px;
		border-right: 0;
	}
`

const TreeRow = styled.tr`
	color: ${(p) => (p.$off ? "#bdbdbd" : "inherit")};
`

const Item = styled.div`
	display: flex;
	align-items: center;
	gap: ${(p) => (p.$root ? 6 : 4)}px;
	padding-left: 3px;
`

const Twisty = styled.span`
	width: 13px;
	padding-left: 4px;

	i {
		display: block;
		width: 0;
		border: 4px solid transparent;
		border-left: 6px solid #858585;
		border-right: 0;
	}
`

const Scroll = styled.div`
	flex: none;
	width: 13px;
	margin-top: 18px;
	border: 1px solid #cdcdcd;
	border-width: 0 1px;
	background: #f4f5f5;

	button {
		display: grid;
		place-items: center;
		width: 100%;
		height: 14px;
		border-bottom: 1px solid #cdcdcd;
		background: #fff;
	}
`

const Viewport = styled.section`
	display: flex;
	flex-direction: column;
	flex: 1;
	min-width: 0;
	background: linear-gradient(#98968b, #c4c3b7);
`

const ViewBar = styled.div`
	display: flex;
	align-items: center;
	justify-content: space-between;
	align-self: flex-end;
	flex: none;
	width: 342px;
	height: 26px;
	margin: 5px 4px 0 0;
	padding: 0 2px;
	background: #fcfcfc;
`

const ViewTool = styled.button`
	position: relative;
	display: grid;
	place-items: center;
	flex: none;
	width: 22px;
	height: 22px;
	border: 1px solid ${(p) => (p.$on ? "#b4b8ba" : "transparent")};
	background: ${(p) => (p.$on ? "#dfe1e3" : "none")};
`

const Corner = styled.i`
	position: absolute;
	right: 0;
	bottom: 0;
	border: 2px solid #555;
	border-top-color: transparent;
	border-left-color: transparent;
`

const Scene = styled.svg`
	display: block;
	flex: 1;
	width: 100%;
	min-height: 0;
`
